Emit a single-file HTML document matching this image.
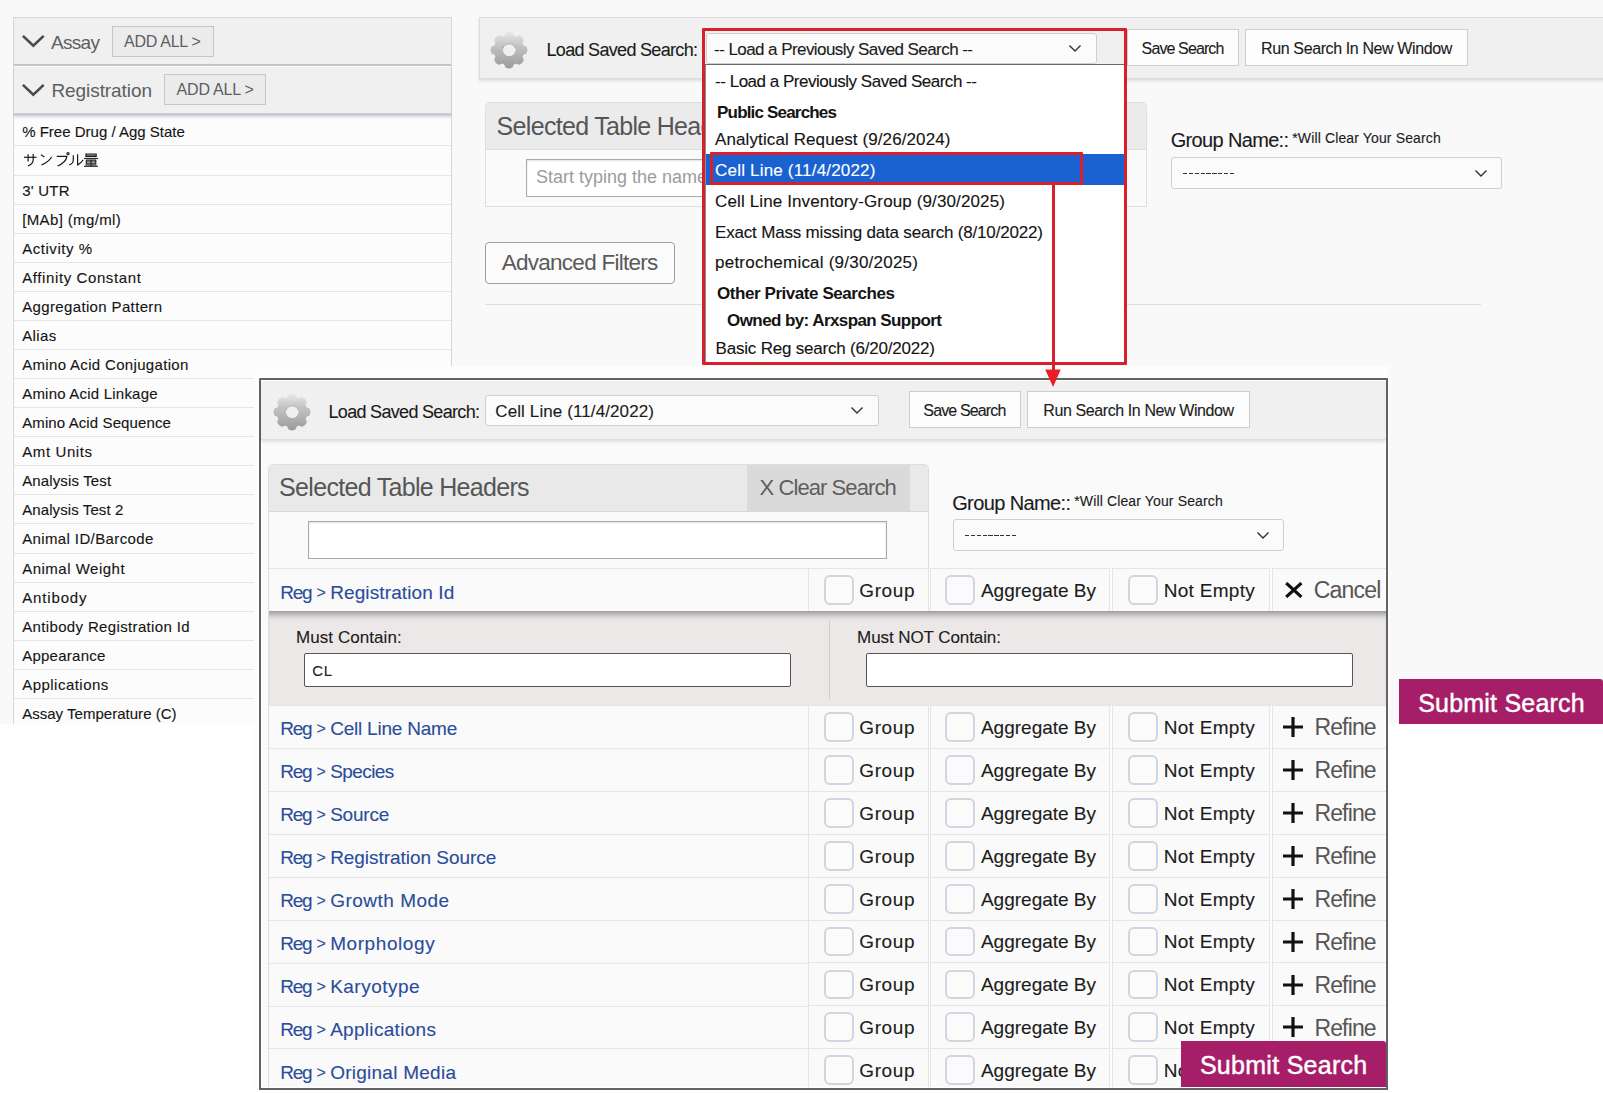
<!DOCTYPE html>
<html lang="en"><head><meta charset="utf-8"><title>Load Saved Search</title><style>html,body{margin:0;padding:0;background:#fff}body{width:1603px;height:1093px;position:relative;overflow:hidden;font-family:"Liberation Sans", sans-serif}#root{position:absolute;left:0;top:0;width:1603px;height:1093px;overflow:hidden}#root div,#root svg,#root span{position:absolute;display:block}#root span{white-space:nowrap;line-height:1;font-kerning:normal}</style></head><body><div id="root"><div class="p1" style="left:0px;top:0px;width:1603px;height:724px;background:#f9f9f9"></div>
<div style="left:13px;top:17px;width:439px;height:707px;background:#fcfcfc;border-left:1px solid #d8d8de;border-right:1px solid #d4d4dc;box-sizing:border-box"></div>
<div style="left:14px;top:145px;width:437px;height:1px;background:#e6e6e6"></div>
<span style="left:22.18px;top:124.00px;font-size:15px;color:#151515;letter-spacing:0.003px;-webkit-text-stroke:0.12px #151515;">% Free Drug / Agg State</span>
<div style="left:14px;top:175px;width:437px;height:1px;background:#e6e6e6"></div>
<svg style="left:18px;top:148px;width:82px;height:22px" viewBox="0 0 82 22"><g fill="none" stroke="#1a1a1a" stroke-width="1.2" stroke-linecap="butt"><path d="M5.9 9.3 H18.5"/><path d="M10.1 6.2 V13.5"/><path d="M15.2 5.9 V11.5 Q15.2 16 10 18"/><path d="M23 6.7 L26.4 9"/><path d="M23.6 16.9 Q30 14.5 33.7 9"/><path d="M38.8 8.4 H48.9 Q48 14.5 39.5 18"/><path d="M55.3 7.3 V12 Q55.3 15.5 51.2 17"/><path d="M59.6 6.2 V16.9 Q63 15.5 65.2 11.8"/><circle cx="50" cy="5.6" r="1.1"/></g><g fill="none" stroke="#1a1a1a" stroke-width="1.05"><path d="M67.9 5.9 H78.2 V8.4 H67.9Z"/><path d="M67.9 7.15 H78.2"/><path d="M66 10.4 H80"/><path d="M68.3 12.1 H77.8 V15.7 H68.3Z"/><path d="M68.3 13.9 H77.8"/><path d="M73.05 12.1 V18.2"/><path d="M66 18.3 H80"/><path d="M67.5 17 H78.5"/></g></svg>
<div style="left:14px;top:204px;width:437px;height:1px;background:#e6e6e6"></div>
<span style="left:22.18px;top:182.90px;font-size:15px;color:#151515;letter-spacing:0.239px;-webkit-text-stroke:0.12px #151515;">3' UTR</span>
<div style="left:14px;top:233px;width:437px;height:1px;background:#e6e6e6"></div>
<span style="left:22.18px;top:211.90px;font-size:15px;color:#151515;letter-spacing:0.373px;-webkit-text-stroke:0.12px #151515;">[MAb] (mg/ml)</span>
<div style="left:14px;top:262px;width:437px;height:1px;background:#e6e6e6"></div>
<span style="left:22.18px;top:240.90px;font-size:15px;color:#151515;letter-spacing:0.543px;-webkit-text-stroke:0.12px #151515;">Activity %</span>
<div style="left:14px;top:291px;width:437px;height:1px;background:#e6e6e6"></div>
<span style="left:22.18px;top:269.90px;font-size:15px;color:#151515;letter-spacing:0.606px;-webkit-text-stroke:0.12px #151515;">Affinity Constant</span>
<div style="left:14px;top:320px;width:437px;height:1px;background:#e6e6e6"></div>
<span style="left:22.18px;top:298.80px;font-size:15px;color:#151515;letter-spacing:0.359px;-webkit-text-stroke:0.12px #151515;">Aggregation Pattern</span>
<div style="left:14px;top:349px;width:437px;height:1px;background:#e6e6e6"></div>
<span style="left:22.18px;top:327.70px;font-size:15px;color:#151515;letter-spacing:0.409px;-webkit-text-stroke:0.12px #151515;">Alias</span>
<div style="left:14px;top:378px;width:437px;height:1px;background:#e6e6e6"></div>
<span style="left:22.18px;top:356.70px;font-size:15px;color:#151515;letter-spacing:0.328px;-webkit-text-stroke:0.12px #151515;">Amino Acid Conjugation</span>
<div style="left:14px;top:407px;width:437px;height:1px;background:#e6e6e6"></div>
<span style="left:22.18px;top:385.70px;font-size:15px;color:#151515;letter-spacing:0.215px;-webkit-text-stroke:0.12px #151515;">Amino Acid Linkage</span>
<div style="left:14px;top:436px;width:437px;height:1px;background:#e6e6e6"></div>
<span style="left:22.18px;top:414.90px;font-size:15px;color:#151515;letter-spacing:0.105px;-webkit-text-stroke:0.12px #151515;">Amino Acid Sequence</span>
<div style="left:14px;top:465px;width:437px;height:1px;background:#e6e6e6"></div>
<span style="left:22.18px;top:443.90px;font-size:15px;color:#151515;letter-spacing:0.611px;-webkit-text-stroke:0.12px #151515;">Amt Units</span>
<div style="left:14px;top:494px;width:437px;height:1px;background:#e6e6e6"></div>
<span style="left:22.18px;top:472.90px;font-size:15px;color:#151515;letter-spacing:0.136px;-webkit-text-stroke:0.12px #151515;">Analysis Test</span>
<div style="left:14px;top:523px;width:437px;height:1px;background:#e6e6e6"></div>
<span style="left:22.18px;top:501.90px;font-size:15px;color:#151515;letter-spacing:0.098px;-webkit-text-stroke:0.12px #151515;">Analysis Test 2</span>
<div style="left:14px;top:553px;width:437px;height:1px;background:#e6e6e6"></div>
<span style="left:22.18px;top:530.90px;font-size:15px;color:#151515;letter-spacing:0.380px;-webkit-text-stroke:0.12px #151515;">Animal ID/Barcode</span>
<div style="left:14px;top:582px;width:437px;height:1px;background:#e6e6e6"></div>
<span style="left:22.18px;top:560.90px;font-size:15px;color:#151515;letter-spacing:0.497px;-webkit-text-stroke:0.12px #151515;">Animal Weight</span>
<div style="left:14px;top:611px;width:437px;height:1px;background:#e6e6e6"></div>
<span style="left:22.18px;top:589.90px;font-size:15px;color:#151515;letter-spacing:0.861px;-webkit-text-stroke:0.12px #151515;">Antibody</span>
<div style="left:14px;top:640px;width:437px;height:1px;background:#e6e6e6"></div>
<span style="left:22.18px;top:618.90px;font-size:15px;color:#151515;letter-spacing:0.354px;-webkit-text-stroke:0.12px #151515;">Antibody Registration Id</span>
<div style="left:14px;top:669px;width:437px;height:1px;background:#e6e6e6"></div>
<span style="left:22.18px;top:647.90px;font-size:15px;color:#151515;letter-spacing:0.249px;-webkit-text-stroke:0.12px #151515;">Appearance</span>
<div style="left:14px;top:698px;width:437px;height:1px;background:#e6e6e6"></div>
<span style="left:22.18px;top:676.90px;font-size:15px;color:#151515;letter-spacing:0.478px;-webkit-text-stroke:0.12px #151515;">Applications</span>
<span style="left:22.18px;top:705.90px;font-size:15px;color:#151515;letter-spacing:0.022px;-webkit-text-stroke:0.12px #151515;">Assay Temperature (C)</span>
<div style="left:13px;top:17px;width:439px;height:49px;background:#f0f0f0;border:1px solid #d6d6dc;border-bottom:2px solid #c4c4cc;box-sizing:border-box"></div>
<div style="left:13px;top:66px;width:439px;height:48px;background:#f0f0f0;border:1px solid #d0d0d8;border-top:1px solid #fcfcfc;border-bottom:1px solid #cfcfd8;box-sizing:border-box"></div>
<div style="left:13px;top:114px;width:439px;height:5px;background:linear-gradient(#bdbdd0,rgba(208,208,224,.65) 45%,rgba(252,252,252,0))"></div>
<svg style="left:20px;top:33.3px;width:26.6px;height:16.6px" viewBox="0 0 26.6 16.6"><path d="M2.91 2.91 L13.3 12.78 L23.69 2.91" fill="none" stroke="#4a4a4a" stroke-width="2.6" stroke-linecap="butt" stroke-linejoin="miter"/></svg>
<svg style="left:20px;top:81.5px;width:26.6px;height:16.6px" viewBox="0 0 26.6 16.6"><path d="M2.91 2.91 L13.3 12.78 L23.69 2.91" fill="none" stroke="#4a4a4a" stroke-width="2.6" stroke-linecap="butt" stroke-linejoin="miter"/></svg>
<span style="left:50.95px;top:32.75px;font-size:19px;color:#5e5e5e;letter-spacing:-0.665px;">Assay</span>
<span style="left:51.45px;top:81.00px;font-size:19px;color:#5e5e5e;letter-spacing:-0.073px;">Registration</span>
<div style="left:112px;top:26px;width:102px;height:31px;background:#ebebeb;border:1px solid #c6c6c6;box-sizing:border-box"></div>
<div style="left:164px;top:74px;width:102px;height:31px;background:#ebebeb;border:1px solid #c6c6c6;box-sizing:border-box"></div>
<span style="left:124.12px;top:33.50px;font-size:16px;color:#5e5e5e;letter-spacing:-0.282px;">ADD ALL &gt;</span>
<span style="left:176.62px;top:81.70px;font-size:16px;color:#5e5e5e;letter-spacing:-0.219px;">ADD ALL &gt;</span>
<div style="left:479px;top:17px;width:1130px;height:62px;background:#f0f0f0;border:1px solid #dcdcdc;box-sizing:border-box;box-shadow:0 2px 3px rgba(0,0,0,.12)"></div>
<svg style="left:490.4px;top:30.8px;width:38px;height:38px" viewBox="0 0 38 38"><defs><linearGradient id="g1" x1="0" y1="0" x2="0" y2="1"><stop offset="0" stop-color="#e9e9e9"/><stop offset="0.4" stop-color="#c2c2c2"/><stop offset="1" stop-color="#9a9a9a"/></linearGradient></defs><path d="M19.00 0.55 L19.72 0.62 L20.43 0.82 L21.11 1.13 L21.81 1.27 L22.50 1.39 L22.93 2.63 L23.35 3.58 L23.78 4.30 L24.23 4.82 L24.74 5.14 L25.33 5.27 L26.02 5.23 L26.83 5.02 L27.80 4.64 L28.97 4.08 L29.55 4.48 L30.14 4.87 L30.84 5.13 L31.49 5.49 L32.05 5.95 L32.51 6.51 L32.87 7.16 L33.13 7.86 L33.52 8.45 L33.92 9.03 L33.36 10.20 L32.98 11.17 L32.77 11.98 L32.73 12.67 L32.86 13.26 L33.18 13.77 L33.70 14.22 L34.42 14.65 L35.37 15.07 L36.61 15.50 L36.73 16.19 L36.87 16.89 L37.18 17.57 L37.38 18.28 L37.45 19.00 L37.38 19.72 L37.18 20.43 L36.87 21.11 L36.73 21.81 L36.61 22.50 L35.37 22.93 L34.42 23.35 L33.70 23.78 L33.18 24.23 L32.86 24.74 L32.73 25.33 L32.77 26.02 L32.98 26.83 L33.36 27.80 L33.92 28.97 L33.52 29.55 L33.13 30.14 L32.87 30.84 L32.51 31.49 L32.05 32.05 L31.49 32.51 L30.84 32.87 L30.14 33.13 L29.55 33.52 L28.97 33.92 L27.80 33.36 L26.83 32.98 L26.02 32.77 L25.33 32.73 L24.74 32.86 L24.23 33.18 L23.78 33.70 L23.35 34.42 L22.93 35.37 L22.50 36.61 L21.81 36.73 L21.11 36.87 L20.43 37.18 L19.72 37.38 L19.00 37.45 L18.28 37.38 L17.57 37.18 L16.89 36.87 L16.19 36.73 L15.50 36.61 L15.07 35.37 L14.65 34.42 L14.22 33.70 L13.77 33.18 L13.26 32.86 L12.67 32.73 L11.98 32.77 L11.17 32.98 L10.20 33.36 L9.03 33.92 L8.45 33.52 L7.86 33.13 L7.16 32.87 L6.51 32.51 L5.95 32.05 L5.49 31.49 L5.13 30.84 L4.87 30.14 L4.48 29.55 L4.08 28.97 L4.64 27.80 L5.02 26.83 L5.23 26.02 L5.27 25.33 L5.14 24.74 L4.82 24.23 L4.30 23.78 L3.58 23.35 L2.63 22.93 L1.39 22.50 L1.27 21.81 L1.13 21.11 L0.82 20.43 L0.62 19.72 L0.55 19.00 L0.62 18.28 L0.82 17.57 L1.13 16.89 L1.27 16.19 L1.39 15.50 L2.63 15.07 L3.58 14.65 L4.30 14.22 L4.82 13.77 L5.14 13.26 L5.27 12.67 L5.23 11.98 L5.02 11.17 L4.64 10.20 L4.08 9.03 L4.48 8.45 L4.87 7.86 L5.13 7.16 L5.49 6.51 L5.95 5.95 L6.51 5.49 L7.16 5.13 L7.86 4.87 L8.45 4.48 L9.03 4.08 L10.20 4.64 L11.17 5.02 L11.98 5.23 L12.67 5.27 L13.26 5.14 L13.77 4.82 L14.22 4.30 L14.65 3.58 L15.07 2.63 L15.50 1.39 L16.19 1.27 L16.89 1.13 L17.57 0.82 L18.28 0.62Z M25.6 18.6 A6.4 6.4 0 1 0 12.8 18.6 A6.4 6.4 0 1 0 25.6 18.6Z" fill="url(#g1)" fill-rule="evenodd"/><path d="M13.1 17.3 A6.4 6.4 0 0 1 25.3 17.3" fill="none" stroke="#8e8e8e" stroke-width="0.9" opacity="0.8"/></svg>
<span style="left:546.51px;top:41.25px;font-size:18px;color:#1c1c1c;letter-spacing:-0.685px;-webkit-text-stroke:0.12px #1c1c1c;">Load Saved Search:</span>
<div style="left:706px;top:33px;width:391px;height:31px;background:#fbfbfb;border:1px solid #cfcfcf;border-radius:3px;box-sizing:border-box"></div>
<span style="left:714.07px;top:41.00px;font-size:17px;color:#1c1c1c;letter-spacing:-0.568px;-webkit-text-stroke:0.12px #1c1c1c;">-- Load a Previously Saved Search --</span>
<svg style="left:1066.75px;top:43px;width:16px;height:11px" viewBox="0 0 16 11"><path d="M2.49 2.49 L8 8.02 L13.51 2.49" fill="none" stroke="#333" stroke-width="1.4" stroke-linecap="butt" stroke-linejoin="miter"/></svg>
<div style="left:1127px;top:29px;width:112px;height:37px;background:#fdfdfd;border:1px solid #cdcdcd;box-sizing:border-box"></div>
<span style="left:1141.62px;top:40.50px;font-size:16px;color:#1c1c1c;letter-spacing:-0.885px;-webkit-text-stroke:0.12px #1c1c1c;">Save Search</span>
<div style="left:1245px;top:29px;width:223px;height:37px;background:#fdfdfd;border:1px solid #cdcdcd;box-sizing:border-box"></div>
<span style="left:1261.12px;top:40.50px;font-size:16px;color:#1c1c1c;letter-spacing:-0.388px;-webkit-text-stroke:0.12px #1c1c1c;">Run Search In New Window</span>
<div style="left:485px;top:102px;width:662px;height:105px;background:#fafafa;border:1px solid #dedede;border-radius:5px 5px 0 0;box-sizing:border-box"></div>
<div style="left:486px;top:103px;width:660px;height:47px;background:#ebebeb;border-radius:4px 4px 0 0;border-bottom:1px solid #dcdcdc;box-sizing:border-box"></div>
<span style="left:496.62px;top:113.50px;font-size:25px;color:#565656;letter-spacing:-0.690px;">Selected Table Headers</span>
<div style="left:526px;top:159px;width:580px;height:38px;background:#fff;border:1px solid #a9a9a9;box-sizing:border-box;box-shadow:inset 0 1px 2px rgba(0,0,0,.13)"></div>
<span style="left:536.00px;top:167.80px;font-size:18px;color:#9c9c9c;">Start typing the name of a field</span>
<span style="left:1170.65px;top:130.00px;font-size:20px;color:#1c1c1c;letter-spacing:-0.651px;-webkit-text-stroke:0.12px #1c1c1c;">Group Name::</span>
<span style="left:1292.23px;top:131.30px;font-size:14px;color:#1c1c1c;letter-spacing:0.137px;-webkit-text-stroke:0.12px #1c1c1c;">*Will Clear Your Search</span>
<div style="left:1171px;top:157px;width:331px;height:31.5px;background:#fbfbfb;border:1px solid #cfcfcf;border-radius:3px;box-sizing:border-box"></div>
<div style="left:1183px;top:172.5px;width:51px;height:1.3px;background:repeating-linear-gradient(90deg,#333 0,#333 4.3px,transparent 4.3px,transparent 5.85px)"></div>
<svg style="left:1473px;top:167.7px;width:16px;height:11px" viewBox="0 0 16 11"><path d="M2.49 2.49 L8 8.02 L13.51 2.49" fill="none" stroke="#333" stroke-width="1.4" stroke-linecap="butt" stroke-linejoin="miter"/></svg>
<div style="left:485px;top:242px;width:190px;height:42px;background:#fbfbfb;border:1px solid #9f9f9f;border-radius:4px;box-sizing:border-box"></div>
<span style="left:501.76px;top:252.25px;font-size:22.5px;color:#5a5a5a;letter-spacing:-0.740px;">Advanced Filters</span>
<div style="left:485px;top:304px;width:996px;height:1px;background:#dedede"></div>
<div style="left:705px;top:64px;width:419.5px;height:298px;background:#fff;border-top:1px solid #6b6b6b;border-left:1px solid #8a8a8a;box-sizing:border-box"></div>
<div style="left:706px;top:154px;width:419px;height:31px;background:#1a62d2"></div>
<span style="left:715.07px;top:73.00px;font-size:17px;color:#141414;letter-spacing:-0.482px;-webkit-text-stroke:0.12px #141414;">-- Load a Previously Saved Search --</span>
<span style="left:717.07px;top:103.50px;font-size:17px;color:#141414;font-weight:700;letter-spacing:-0.820px;">Public Searches</span>
<span style="left:715.07px;top:130.50px;font-size:17px;color:#141414;letter-spacing:0.100px;-webkit-text-stroke:0.12px #141414;">Analytical Request (9/26/2024)</span>
<span style="left:715.07px;top:161.75px;font-size:17px;color:#fff;letter-spacing:0.190px;-webkit-text-stroke:0.12px #fff;">Cell Line (11/4/2022)</span>
<span style="left:715.07px;top:193.00px;font-size:17px;color:#141414;letter-spacing:0.124px;-webkit-text-stroke:0.12px #141414;">Cell Line Inventory-Group (9/30/2025)</span>
<span style="left:715.07px;top:223.50px;font-size:17px;color:#141414;letter-spacing:-0.185px;-webkit-text-stroke:0.12px #141414;">Exact Mass missing data search (8/10/2022)</span>
<span style="left:715.07px;top:254.30px;font-size:17px;color:#141414;letter-spacing:0.223px;-webkit-text-stroke:0.12px #141414;">petrochemical (9/30/2025)</span>
<span style="left:717.07px;top:285.25px;font-size:17px;color:#141414;font-weight:700;letter-spacing:-0.440px;">Other Private Searches</span>
<span style="left:727.07px;top:312.00px;font-size:17px;color:#141414;font-weight:700;letter-spacing:-0.584px;">Owned by: Arxspan Support</span>
<span style="left:715.57px;top:339.50px;font-size:17px;color:#141414;letter-spacing:-0.205px;-webkit-text-stroke:0.12px #141414;">Basic Reg search (6/20/2022)</span>
<div style="left:1399px;top:679px;width:204px;height:45px;background:#a61e68;border-radius:0 3px 0 0"></div>
<span style="left:1418.22px;top:690.90px;font-size:25px;color:#fff;letter-spacing:0.207px;-webkit-text-stroke:0.45px #fff;">Submit Search</span>
<div style="left:254px;top:366px;width:1134px;height:727px;background:#fdfdfd"></div>
<div style="left:259px;top:378px;width:1129px;height:712px;background:#fafafa;border:2px solid #626262;box-sizing:border-box;border-radius:1px;box-shadow:inset 0 0 0 1px rgba(255,255,255,.85),0 0 0 1px #fff"></div>
<div style="left:261px;top:381px;width:1125px;height:59px;background:#f0f0f0;border-bottom:1px solid #dedede;box-sizing:border-box;box-shadow:0 2px 3px rgba(0,0,0,.10)"></div>
<svg style="left:272.6px;top:393px;width:38px;height:38px" viewBox="0 0 38 38"><defs><linearGradient id="g2" x1="0" y1="0" x2="0" y2="1"><stop offset="0" stop-color="#e9e9e9"/><stop offset="0.4" stop-color="#c2c2c2"/><stop offset="1" stop-color="#9a9a9a"/></linearGradient></defs><path d="M19.00 0.55 L19.72 0.62 L20.43 0.82 L21.11 1.13 L21.81 1.27 L22.50 1.39 L22.93 2.63 L23.35 3.58 L23.78 4.30 L24.23 4.82 L24.74 5.14 L25.33 5.27 L26.02 5.23 L26.83 5.02 L27.80 4.64 L28.97 4.08 L29.55 4.48 L30.14 4.87 L30.84 5.13 L31.49 5.49 L32.05 5.95 L32.51 6.51 L32.87 7.16 L33.13 7.86 L33.52 8.45 L33.92 9.03 L33.36 10.20 L32.98 11.17 L32.77 11.98 L32.73 12.67 L32.86 13.26 L33.18 13.77 L33.70 14.22 L34.42 14.65 L35.37 15.07 L36.61 15.50 L36.73 16.19 L36.87 16.89 L37.18 17.57 L37.38 18.28 L37.45 19.00 L37.38 19.72 L37.18 20.43 L36.87 21.11 L36.73 21.81 L36.61 22.50 L35.37 22.93 L34.42 23.35 L33.70 23.78 L33.18 24.23 L32.86 24.74 L32.73 25.33 L32.77 26.02 L32.98 26.83 L33.36 27.80 L33.92 28.97 L33.52 29.55 L33.13 30.14 L32.87 30.84 L32.51 31.49 L32.05 32.05 L31.49 32.51 L30.84 32.87 L30.14 33.13 L29.55 33.52 L28.97 33.92 L27.80 33.36 L26.83 32.98 L26.02 32.77 L25.33 32.73 L24.74 32.86 L24.23 33.18 L23.78 33.70 L23.35 34.42 L22.93 35.37 L22.50 36.61 L21.81 36.73 L21.11 36.87 L20.43 37.18 L19.72 37.38 L19.00 37.45 L18.28 37.38 L17.57 37.18 L16.89 36.87 L16.19 36.73 L15.50 36.61 L15.07 35.37 L14.65 34.42 L14.22 33.70 L13.77 33.18 L13.26 32.86 L12.67 32.73 L11.98 32.77 L11.17 32.98 L10.20 33.36 L9.03 33.92 L8.45 33.52 L7.86 33.13 L7.16 32.87 L6.51 32.51 L5.95 32.05 L5.49 31.49 L5.13 30.84 L4.87 30.14 L4.48 29.55 L4.08 28.97 L4.64 27.80 L5.02 26.83 L5.23 26.02 L5.27 25.33 L5.14 24.74 L4.82 24.23 L4.30 23.78 L3.58 23.35 L2.63 22.93 L1.39 22.50 L1.27 21.81 L1.13 21.11 L0.82 20.43 L0.62 19.72 L0.55 19.00 L0.62 18.28 L0.82 17.57 L1.13 16.89 L1.27 16.19 L1.39 15.50 L2.63 15.07 L3.58 14.65 L4.30 14.22 L4.82 13.77 L5.14 13.26 L5.27 12.67 L5.23 11.98 L5.02 11.17 L4.64 10.20 L4.08 9.03 L4.48 8.45 L4.87 7.86 L5.13 7.16 L5.49 6.51 L5.95 5.95 L6.51 5.49 L7.16 5.13 L7.86 4.87 L8.45 4.48 L9.03 4.08 L10.20 4.64 L11.17 5.02 L11.98 5.23 L12.67 5.27 L13.26 5.14 L13.77 4.82 L14.22 4.30 L14.65 3.58 L15.07 2.63 L15.50 1.39 L16.19 1.27 L16.89 1.13 L17.57 0.82 L18.28 0.62Z M25.6 18.6 A6.4 6.4 0 1 0 12.8 18.6 A6.4 6.4 0 1 0 25.6 18.6Z" fill="url(#g2)" fill-rule="evenodd"/><path d="M13.1 17.3 A6.4 6.4 0 0 1 25.3 17.3" fill="none" stroke="#8e8e8e" stroke-width="0.9" opacity="0.8"/></svg>
<span style="left:328.51px;top:403.00px;font-size:18px;color:#1c1c1c;letter-spacing:-0.685px;-webkit-text-stroke:0.12px #1c1c1c;">Load Saved Search:</span>
<div style="left:485px;top:395px;width:394px;height:31px;background:#fbfbfb;border:1px solid #cfcfcf;border-radius:3px;box-sizing:border-box"></div>
<span style="left:495.31px;top:403.25px;font-size:17px;color:#1c1c1c;letter-spacing:0.103px;-webkit-text-stroke:0.12px #1c1c1c;">Cell Line (11/4/2022)</span>
<svg style="left:848.75px;top:405.25px;width:16px;height:11px" viewBox="0 0 16 11"><path d="M2.49 2.49 L8 8.02 L13.51 2.49" fill="none" stroke="#333" stroke-width="1.4" stroke-linecap="butt" stroke-linejoin="miter"/></svg>
<div style="left:909px;top:391px;width:112px;height:37px;background:#fdfdfd;border:1px solid #cdcdcd;box-sizing:border-box"></div>
<span style="left:923.37px;top:403.25px;font-size:16px;color:#1c1c1c;letter-spacing:-0.860px;-webkit-text-stroke:0.12px #1c1c1c;">Save Search</span>
<div style="left:1027px;top:391px;width:223px;height:37px;background:#fdfdfd;border:1px solid #cdcdcd;box-sizing:border-box"></div>
<span style="left:1043.37px;top:403.25px;font-size:16px;color:#1c1c1c;letter-spacing:-0.406px;-webkit-text-stroke:0.12px #1c1c1c;">Run Search In New Window</span>
<div style="left:267.5px;top:464px;width:661.5px;height:624px;background:#fafafa;border:1px solid #dedede;border-bottom:0;border-radius:5px 5px 0 0;box-sizing:border-box"></div>
<div style="left:268.5px;top:465px;width:659.5px;height:47px;background:#e9e9e9;border-radius:4px 4px 0 0;border-bottom:1px solid #d8d8d8;box-sizing:border-box"></div>
<span style="left:279.12px;top:475.25px;font-size:25px;color:#565656;letter-spacing:-0.690px;">Selected Table Headers</span>
<div style="left:747px;top:465px;width:163px;height:46px;background:#dadada"></div>
<span style="left:759.54px;top:476.50px;font-size:22px;color:#5e5e5e;letter-spacing:-0.924px;">X Clear Search</span>
<div style="left:308px;top:521px;width:579px;height:37.5px;background:#fff;border:1px solid #a9a9a9;box-sizing:border-box;box-shadow:inset 0 1px 2px rgba(0,0,0,.13)"></div>
<span style="left:952.15px;top:493.00px;font-size:20px;color:#1c1c1c;letter-spacing:-0.605px;-webkit-text-stroke:0.12px #1c1c1c;">Group Name::</span>
<span style="left:1074.23px;top:493.50px;font-size:14px;color:#1c1c1c;letter-spacing:0.137px;-webkit-text-stroke:0.12px #1c1c1c;">*Will Clear Your Search</span>
<div style="left:953px;top:519px;width:331px;height:31.5px;background:#fbfbfb;border:1px solid #cfcfcf;border-radius:3px;box-sizing:border-box"></div>
<div style="left:964.5px;top:534.5px;width:51px;height:1.3px;background:repeating-linear-gradient(90deg,#333 0,#333 4.3px,transparent 4.3px,transparent 5.85px)"></div>
<svg style="left:1255.3px;top:529.6px;width:16px;height:11px" viewBox="0 0 16 11"><path d="M2.49 2.49 L8 8.02 L13.51 2.49" fill="none" stroke="#333" stroke-width="1.4" stroke-linecap="butt" stroke-linejoin="miter"/></svg>
<div style="left:268.5px;top:568px;width:540px;height:1px;background:#e5e5e5"></div>
<div style="left:808.5px;top:568px;width:120px;height:1px;background:#e5e5e5"></div>
<div style="left:930px;top:568px;width:180px;height:1px;background:#e5e5e5"></div>
<div style="left:1112px;top:568px;width:158px;height:1px;background:#e5e5e5"></div>
<div style="left:1272px;top:568px;width:114px;height:1px;background:#e5e5e5"></div>
<div style="left:808px;top:568.5px;width:1px;height:43px;background:#e5e5e5"></div>
<div style="left:928px;top:568.5px;width:1px;height:43px;background:#e5e5e5"></div>
<div style="left:930px;top:568.5px;width:1px;height:43px;background:#e5e5e5"></div>
<div style="left:1109px;top:568.5px;width:1px;height:43px;background:#e5e5e5"></div>
<div style="left:1112px;top:568.5px;width:1px;height:43px;background:#e5e5e5"></div>
<div style="left:1269px;top:568.5px;width:1px;height:43px;background:#e5e5e5"></div>
<div style="left:1272px;top:568.5px;width:1px;height:43px;background:#e5e5e5"></div>
<div style="left:1110.5px;top:567.5px;width:1.5px;height:44px;background:#fdfdfd"></div>
<div style="left:1270.5px;top:567.5px;width:1.5px;height:44px;background:#fdfdfd"></div>
<span style="left:280.15px;top:582.70px;font-size:19px;color:#2b4c9b;letter-spacing:-1.185px;-webkit-text-stroke:0.12px #2b4c9b;">Reg</span>
<span style="left:317.40px;top:584.70px;font-size:16px;color:#2b4c9b;-webkit-text-stroke:0.12px #2b4c9b;margin-left:-0.8px;">&gt;</span>
<span style="left:330.15px;top:582.70px;font-size:19px;color:#2b4c9b;letter-spacing:0.116px;-webkit-text-stroke:0.12px #2b4c9b;">Registration Id</span>
<div style="left:824.25px;top:575.25px;width:29.5px;height:29.5px;background:#fbfbfb;border:2px solid #cfd6df;border-radius:6px;box-sizing:border-box"></div>
<div style="left:945px;top:575.25px;width:29.5px;height:29.5px;background:#fbfbfb;border:2px solid #cfd6df;border-radius:6px;box-sizing:border-box"></div>
<div style="left:1128.25px;top:575.25px;width:29.5px;height:29.5px;background:#fbfbfb;border:2px solid #cfd6df;border-radius:6px;box-sizing:border-box"></div>
<span style="left:859.36px;top:581.25px;font-size:19px;color:#1c1c1c;letter-spacing:0.569px;-webkit-text-stroke:0.12px #1c1c1c;">Group</span>
<span style="left:980.96px;top:581.25px;font-size:19px;color:#1c1c1c;letter-spacing:-0.005px;-webkit-text-stroke:0.12px #1c1c1c;">Aggregate By</span>
<span style="left:1163.65px;top:581.25px;font-size:19px;color:#1c1c1c;letter-spacing:0.298px;-webkit-text-stroke:0.12px #1c1c1c;">Not Empty</span>
<svg style="left:1285px;top:582px;width:18px;height:16px" viewBox="0 0 18 16"><path d="M1.2 1 L16.4 15 M16.4 1 L1.2 15" stroke="#111" stroke-width="3.1" fill="none"/></svg>
<span style="left:1313.73px;top:579.30px;font-size:23px;color:#565656;letter-spacing:-0.776px;">Cancel</span>
<div style="left:268.5px;top:611px;width:1117.5px;height:94.5px;background:#ebe8e7;box-shadow:inset 0 9px 7px -6px rgba(0,0,0,.40)"></div>
<div style="left:828.5px;top:621px;width:1px;height:79px;background:#cfcccb"></div>
<span style="left:296.06px;top:629.00px;font-size:17px;color:#1c1c1c;letter-spacing:0.057px;-webkit-text-stroke:0.12px #1c1c1c;">Must Contain:</span>
<span style="left:857.07px;top:629.00px;font-size:17px;color:#1c1c1c;letter-spacing:-0.082px;-webkit-text-stroke:0.12px #1c1c1c;">Must NOT Contain:</span>
<div style="left:304px;top:653px;width:487px;height:34px;background:#fff;border:1px solid #555;border-radius:2px;box-sizing:border-box"></div>
<div style="left:866px;top:653px;width:487px;height:34px;background:#fff;border:1px solid #555;border-radius:2px;box-sizing:border-box"></div>
<span style="left:312.18px;top:663.00px;font-size:15px;color:#1c1c1c;letter-spacing:0.712px;-webkit-text-stroke:0.12px #1c1c1c;">CL</span>
<div style="left:268.5px;top:705px;width:540px;height:1px;background:#e5e5e5"></div>
<div style="left:808.5px;top:705px;width:120px;height:1px;background:#e5e5e5"></div>
<div style="left:930px;top:705px;width:180px;height:1px;background:#e5e5e5"></div>
<div style="left:1112px;top:705px;width:158px;height:1px;background:#e5e5e5"></div>
<div style="left:1272px;top:705px;width:114px;height:1px;background:#e5e5e5"></div>
<div style="left:808px;top:705.5px;width:1px;height:43px;background:#e5e5e5"></div>
<div style="left:928px;top:705.5px;width:1px;height:43px;background:#e5e5e5"></div>
<div style="left:930px;top:705.5px;width:1px;height:43px;background:#e5e5e5"></div>
<div style="left:1109px;top:705.5px;width:1px;height:43px;background:#e5e5e5"></div>
<div style="left:1112px;top:705.5px;width:1px;height:43px;background:#e5e5e5"></div>
<div style="left:1269px;top:705.5px;width:1px;height:43px;background:#e5e5e5"></div>
<div style="left:1272px;top:705.5px;width:1px;height:43px;background:#e5e5e5"></div>
<div style="left:1110.5px;top:704.5px;width:1.5px;height:44px;background:#fdfdfd"></div>
<div style="left:1270.5px;top:704.5px;width:1.5px;height:44px;background:#fdfdfd"></div>
<span style="left:280.15px;top:719.00px;font-size:19px;color:#2b4c9b;letter-spacing:-1.185px;-webkit-text-stroke:0.12px #2b4c9b;">Reg</span>
<span style="left:317.40px;top:721.00px;font-size:16px;color:#2b4c9b;-webkit-text-stroke:0.12px #2b4c9b;margin-left:-0.8px;">&gt;</span>
<span style="left:330.15px;top:719.00px;font-size:19px;color:#2b4c9b;letter-spacing:-0.213px;-webkit-text-stroke:0.12px #2b4c9b;">Cell Line Name</span>
<div style="left:824.25px;top:712.25px;width:29.5px;height:29.5px;background:#fbfbfb;border:2px solid #cfd6df;border-radius:6px;box-sizing:border-box"></div>
<div style="left:945px;top:712.25px;width:29.5px;height:29.5px;background:#fbfbfb;border:2px solid #cfd6df;border-radius:6px;box-sizing:border-box"></div>
<div style="left:1128.25px;top:712.25px;width:29.5px;height:29.5px;background:#fbfbfb;border:2px solid #cfd6df;border-radius:6px;box-sizing:border-box"></div>
<span style="left:859.36px;top:717.60px;font-size:19px;color:#1c1c1c;letter-spacing:0.569px;-webkit-text-stroke:0.12px #1c1c1c;">Group</span>
<span style="left:980.96px;top:717.60px;font-size:19px;color:#1c1c1c;letter-spacing:-0.005px;-webkit-text-stroke:0.12px #1c1c1c;">Aggregate By</span>
<span style="left:1163.65px;top:717.60px;font-size:19px;color:#1c1c1c;letter-spacing:0.298px;-webkit-text-stroke:0.12px #1c1c1c;">Not Empty</span>
<svg style="left:1283.2px;top:717.1px;width:20px;height:20px" viewBox="0 0 20 20"><path d="M10 0V20M0 10H20" stroke="#111" stroke-width="3.2" fill="none"/></svg>
<span style="left:1314.43px;top:716.30px;font-size:23px;color:#565656;letter-spacing:-0.851px;">Refine</span>
<div style="left:268.5px;top:748px;width:540px;height:1px;background:#e5e5e5"></div>
<div style="left:808.5px;top:748px;width:120px;height:1px;background:#e5e5e5"></div>
<div style="left:930px;top:748px;width:180px;height:1px;background:#e5e5e5"></div>
<div style="left:1112px;top:748px;width:158px;height:1px;background:#e5e5e5"></div>
<div style="left:1272px;top:748px;width:114px;height:1px;background:#e5e5e5"></div>
<div style="left:808px;top:748.5px;width:1px;height:43px;background:#e5e5e5"></div>
<div style="left:928px;top:748.5px;width:1px;height:43px;background:#e5e5e5"></div>
<div style="left:930px;top:748.5px;width:1px;height:43px;background:#e5e5e5"></div>
<div style="left:1109px;top:748.5px;width:1px;height:43px;background:#e5e5e5"></div>
<div style="left:1112px;top:748.5px;width:1px;height:43px;background:#e5e5e5"></div>
<div style="left:1269px;top:748.5px;width:1px;height:43px;background:#e5e5e5"></div>
<div style="left:1272px;top:748.5px;width:1px;height:43px;background:#e5e5e5"></div>
<div style="left:1110.5px;top:747.5px;width:1.5px;height:44px;background:#fdfdfd"></div>
<div style="left:1270.5px;top:747.5px;width:1.5px;height:44px;background:#fdfdfd"></div>
<span style="left:280.15px;top:762.00px;font-size:19px;color:#2b4c9b;letter-spacing:-1.185px;-webkit-text-stroke:0.12px #2b4c9b;">Reg</span>
<span style="left:317.40px;top:764.00px;font-size:16px;color:#2b4c9b;-webkit-text-stroke:0.12px #2b4c9b;margin-left:-0.8px;">&gt;</span>
<span style="left:330.15px;top:762.00px;font-size:19px;color:#2b4c9b;letter-spacing:-0.578px;-webkit-text-stroke:0.12px #2b4c9b;">Species</span>
<div style="left:824.25px;top:755.25px;width:29.5px;height:29.5px;background:#fbfbfb;border:2px solid #cfd6df;border-radius:6px;box-sizing:border-box"></div>
<div style="left:945px;top:755.25px;width:29.5px;height:29.5px;background:#fbfbfb;border:2px solid #cfd6df;border-radius:6px;box-sizing:border-box"></div>
<div style="left:1128.25px;top:755.25px;width:29.5px;height:29.5px;background:#fbfbfb;border:2px solid #cfd6df;border-radius:6px;box-sizing:border-box"></div>
<span style="left:859.36px;top:760.60px;font-size:19px;color:#1c1c1c;letter-spacing:0.569px;-webkit-text-stroke:0.12px #1c1c1c;">Group</span>
<span style="left:980.96px;top:760.60px;font-size:19px;color:#1c1c1c;letter-spacing:-0.005px;-webkit-text-stroke:0.12px #1c1c1c;">Aggregate By</span>
<span style="left:1163.65px;top:760.60px;font-size:19px;color:#1c1c1c;letter-spacing:0.298px;-webkit-text-stroke:0.12px #1c1c1c;">Not Empty</span>
<svg style="left:1283.2px;top:760.1px;width:20px;height:20px" viewBox="0 0 20 20"><path d="M10 0V20M0 10H20" stroke="#111" stroke-width="3.2" fill="none"/></svg>
<span style="left:1314.43px;top:759.30px;font-size:23px;color:#565656;letter-spacing:-0.851px;">Refine</span>
<div style="left:268.5px;top:791px;width:540px;height:1px;background:#e5e5e5"></div>
<div style="left:808.5px;top:791px;width:120px;height:1px;background:#e5e5e5"></div>
<div style="left:930px;top:791px;width:180px;height:1px;background:#e5e5e5"></div>
<div style="left:1112px;top:791px;width:158px;height:1px;background:#e5e5e5"></div>
<div style="left:1272px;top:791px;width:114px;height:1px;background:#e5e5e5"></div>
<div style="left:808px;top:791.6px;width:1px;height:43px;background:#e5e5e5"></div>
<div style="left:928px;top:791.6px;width:1px;height:43px;background:#e5e5e5"></div>
<div style="left:930px;top:791.6px;width:1px;height:43px;background:#e5e5e5"></div>
<div style="left:1109px;top:791.6px;width:1px;height:43px;background:#e5e5e5"></div>
<div style="left:1112px;top:791.6px;width:1px;height:43px;background:#e5e5e5"></div>
<div style="left:1269px;top:791.6px;width:1px;height:43px;background:#e5e5e5"></div>
<div style="left:1272px;top:791.6px;width:1px;height:43px;background:#e5e5e5"></div>
<div style="left:1110.5px;top:790.6px;width:1.5px;height:44px;background:#fdfdfd"></div>
<div style="left:1270.5px;top:790.6px;width:1.5px;height:44px;background:#fdfdfd"></div>
<span style="left:280.15px;top:805.10px;font-size:19px;color:#2b4c9b;letter-spacing:-1.185px;-webkit-text-stroke:0.12px #2b4c9b;">Reg</span>
<span style="left:317.40px;top:807.10px;font-size:16px;color:#2b4c9b;-webkit-text-stroke:0.12px #2b4c9b;margin-left:-0.8px;">&gt;</span>
<span style="left:330.15px;top:805.10px;font-size:19px;color:#2b4c9b;letter-spacing:-0.213px;-webkit-text-stroke:0.12px #2b4c9b;">Source</span>
<div style="left:824.25px;top:798.35px;width:29.5px;height:29.5px;background:#fbfbfb;border:2px solid #cfd6df;border-radius:6px;box-sizing:border-box"></div>
<div style="left:945px;top:798.35px;width:29.5px;height:29.5px;background:#fbfbfb;border:2px solid #cfd6df;border-radius:6px;box-sizing:border-box"></div>
<div style="left:1128.25px;top:798.35px;width:29.5px;height:29.5px;background:#fbfbfb;border:2px solid #cfd6df;border-radius:6px;box-sizing:border-box"></div>
<span style="left:859.36px;top:803.70px;font-size:19px;color:#1c1c1c;letter-spacing:0.569px;-webkit-text-stroke:0.12px #1c1c1c;">Group</span>
<span style="left:980.96px;top:803.70px;font-size:19px;color:#1c1c1c;letter-spacing:-0.005px;-webkit-text-stroke:0.12px #1c1c1c;">Aggregate By</span>
<span style="left:1163.65px;top:803.70px;font-size:19px;color:#1c1c1c;letter-spacing:0.298px;-webkit-text-stroke:0.12px #1c1c1c;">Not Empty</span>
<svg style="left:1283.2px;top:803.2px;width:20px;height:20px" viewBox="0 0 20 20"><path d="M10 0V20M0 10H20" stroke="#111" stroke-width="3.2" fill="none"/></svg>
<span style="left:1314.43px;top:802.40px;font-size:23px;color:#565656;letter-spacing:-0.851px;">Refine</span>
<div style="left:268.5px;top:834px;width:540px;height:1px;background:#e5e5e5"></div>
<div style="left:808.5px;top:834px;width:120px;height:1px;background:#e5e5e5"></div>
<div style="left:930px;top:834px;width:180px;height:1px;background:#e5e5e5"></div>
<div style="left:1112px;top:834px;width:158px;height:1px;background:#e5e5e5"></div>
<div style="left:1272px;top:834px;width:114px;height:1px;background:#e5e5e5"></div>
<div style="left:808px;top:834.5px;width:1px;height:43px;background:#e5e5e5"></div>
<div style="left:928px;top:834.5px;width:1px;height:43px;background:#e5e5e5"></div>
<div style="left:930px;top:834.5px;width:1px;height:43px;background:#e5e5e5"></div>
<div style="left:1109px;top:834.5px;width:1px;height:43px;background:#e5e5e5"></div>
<div style="left:1112px;top:834.5px;width:1px;height:43px;background:#e5e5e5"></div>
<div style="left:1269px;top:834.5px;width:1px;height:43px;background:#e5e5e5"></div>
<div style="left:1272px;top:834.5px;width:1px;height:43px;background:#e5e5e5"></div>
<div style="left:1110.5px;top:833.5px;width:1.5px;height:44px;background:#fdfdfd"></div>
<div style="left:1270.5px;top:833.5px;width:1.5px;height:44px;background:#fdfdfd"></div>
<span style="left:280.15px;top:848.00px;font-size:19px;color:#2b4c9b;letter-spacing:-1.185px;-webkit-text-stroke:0.12px #2b4c9b;">Reg</span>
<span style="left:317.40px;top:850.00px;font-size:16px;color:#2b4c9b;-webkit-text-stroke:0.12px #2b4c9b;margin-left:-0.8px;">&gt;</span>
<span style="left:330.15px;top:848.00px;font-size:19px;color:#2b4c9b;letter-spacing:-0.041px;-webkit-text-stroke:0.12px #2b4c9b;">Registration Source</span>
<div style="left:824.25px;top:841.25px;width:29.5px;height:29.5px;background:#fbfbfb;border:2px solid #cfd6df;border-radius:6px;box-sizing:border-box"></div>
<div style="left:945px;top:841.25px;width:29.5px;height:29.5px;background:#fbfbfb;border:2px solid #cfd6df;border-radius:6px;box-sizing:border-box"></div>
<div style="left:1128.25px;top:841.25px;width:29.5px;height:29.5px;background:#fbfbfb;border:2px solid #cfd6df;border-radius:6px;box-sizing:border-box"></div>
<span style="left:859.36px;top:846.60px;font-size:19px;color:#1c1c1c;letter-spacing:0.569px;-webkit-text-stroke:0.12px #1c1c1c;">Group</span>
<span style="left:980.96px;top:846.60px;font-size:19px;color:#1c1c1c;letter-spacing:-0.005px;-webkit-text-stroke:0.12px #1c1c1c;">Aggregate By</span>
<span style="left:1163.65px;top:846.60px;font-size:19px;color:#1c1c1c;letter-spacing:0.298px;-webkit-text-stroke:0.12px #1c1c1c;">Not Empty</span>
<svg style="left:1283.2px;top:846.1px;width:20px;height:20px" viewBox="0 0 20 20"><path d="M10 0V20M0 10H20" stroke="#111" stroke-width="3.2" fill="none"/></svg>
<span style="left:1314.43px;top:845.30px;font-size:23px;color:#565656;letter-spacing:-0.851px;">Refine</span>
<div style="left:268.5px;top:877px;width:540px;height:1px;background:#e5e5e5"></div>
<div style="left:808.5px;top:877px;width:120px;height:1px;background:#e5e5e5"></div>
<div style="left:930px;top:877px;width:180px;height:1px;background:#e5e5e5"></div>
<div style="left:1112px;top:877px;width:158px;height:1px;background:#e5e5e5"></div>
<div style="left:1272px;top:877px;width:114px;height:1px;background:#e5e5e5"></div>
<div style="left:808px;top:877.4px;width:1px;height:43px;background:#e5e5e5"></div>
<div style="left:928px;top:877.4px;width:1px;height:43px;background:#e5e5e5"></div>
<div style="left:930px;top:877.4px;width:1px;height:43px;background:#e5e5e5"></div>
<div style="left:1109px;top:877.4px;width:1px;height:43px;background:#e5e5e5"></div>
<div style="left:1112px;top:877.4px;width:1px;height:43px;background:#e5e5e5"></div>
<div style="left:1269px;top:877.4px;width:1px;height:43px;background:#e5e5e5"></div>
<div style="left:1272px;top:877.4px;width:1px;height:43px;background:#e5e5e5"></div>
<div style="left:1110.5px;top:876.4px;width:1.5px;height:44px;background:#fdfdfd"></div>
<div style="left:1270.5px;top:876.4px;width:1.5px;height:44px;background:#fdfdfd"></div>
<span style="left:280.15px;top:890.90px;font-size:19px;color:#2b4c9b;letter-spacing:-1.185px;-webkit-text-stroke:0.12px #2b4c9b;">Reg</span>
<span style="left:317.40px;top:892.90px;font-size:16px;color:#2b4c9b;-webkit-text-stroke:0.12px #2b4c9b;margin-left:-0.8px;">&gt;</span>
<span style="left:330.15px;top:890.90px;font-size:19px;color:#2b4c9b;letter-spacing:0.499px;-webkit-text-stroke:0.12px #2b4c9b;">Growth Mode</span>
<div style="left:824.25px;top:884.15px;width:29.5px;height:29.5px;background:#fbfbfb;border:2px solid #cfd6df;border-radius:6px;box-sizing:border-box"></div>
<div style="left:945px;top:884.15px;width:29.5px;height:29.5px;background:#fbfbfb;border:2px solid #cfd6df;border-radius:6px;box-sizing:border-box"></div>
<div style="left:1128.25px;top:884.15px;width:29.5px;height:29.5px;background:#fbfbfb;border:2px solid #cfd6df;border-radius:6px;box-sizing:border-box"></div>
<span style="left:859.36px;top:889.50px;font-size:19px;color:#1c1c1c;letter-spacing:0.569px;-webkit-text-stroke:0.12px #1c1c1c;">Group</span>
<span style="left:980.96px;top:889.50px;font-size:19px;color:#1c1c1c;letter-spacing:-0.005px;-webkit-text-stroke:0.12px #1c1c1c;">Aggregate By</span>
<span style="left:1163.65px;top:889.50px;font-size:19px;color:#1c1c1c;letter-spacing:0.298px;-webkit-text-stroke:0.12px #1c1c1c;">Not Empty</span>
<svg style="left:1283.2px;top:889px;width:20px;height:20px" viewBox="0 0 20 20"><path d="M10 0V20M0 10H20" stroke="#111" stroke-width="3.2" fill="none"/></svg>
<span style="left:1314.43px;top:888.20px;font-size:23px;color:#565656;letter-spacing:-0.851px;">Refine</span>
<div style="left:268.5px;top:920px;width:540px;height:1px;background:#e5e5e5"></div>
<div style="left:808.5px;top:920px;width:120px;height:1px;background:#e5e5e5"></div>
<div style="left:930px;top:920px;width:180px;height:1px;background:#e5e5e5"></div>
<div style="left:1112px;top:920px;width:158px;height:1px;background:#e5e5e5"></div>
<div style="left:1272px;top:920px;width:114px;height:1px;background:#e5e5e5"></div>
<div style="left:808px;top:920.5px;width:1px;height:43px;background:#e5e5e5"></div>
<div style="left:928px;top:920.5px;width:1px;height:43px;background:#e5e5e5"></div>
<div style="left:930px;top:920.5px;width:1px;height:43px;background:#e5e5e5"></div>
<div style="left:1109px;top:920.5px;width:1px;height:43px;background:#e5e5e5"></div>
<div style="left:1112px;top:920.5px;width:1px;height:43px;background:#e5e5e5"></div>
<div style="left:1269px;top:920.5px;width:1px;height:43px;background:#e5e5e5"></div>
<div style="left:1272px;top:920.5px;width:1px;height:43px;background:#e5e5e5"></div>
<div style="left:1110.5px;top:919.5px;width:1.5px;height:44px;background:#fdfdfd"></div>
<div style="left:1270.5px;top:919.5px;width:1.5px;height:44px;background:#fdfdfd"></div>
<span style="left:280.15px;top:934.00px;font-size:19px;color:#2b4c9b;letter-spacing:-1.185px;-webkit-text-stroke:0.12px #2b4c9b;">Reg</span>
<span style="left:317.40px;top:936.00px;font-size:16px;color:#2b4c9b;-webkit-text-stroke:0.12px #2b4c9b;margin-left:-0.8px;">&gt;</span>
<span style="left:330.15px;top:934.00px;font-size:19px;color:#2b4c9b;letter-spacing:0.584px;-webkit-text-stroke:0.12px #2b4c9b;">Morphology</span>
<div style="left:824.25px;top:926.75px;width:29.5px;height:29.5px;background:#fbfbfb;border:2px solid #cfd6df;border-radius:6px;box-sizing:border-box"></div>
<div style="left:945px;top:926.75px;width:29.5px;height:29.5px;background:#fbfbfb;border:2px solid #cfd6df;border-radius:6px;box-sizing:border-box"></div>
<div style="left:1128.25px;top:926.75px;width:29.5px;height:29.5px;background:#fbfbfb;border:2px solid #cfd6df;border-radius:6px;box-sizing:border-box"></div>
<span style="left:859.36px;top:932.10px;font-size:19px;color:#1c1c1c;letter-spacing:0.569px;-webkit-text-stroke:0.12px #1c1c1c;">Group</span>
<span style="left:980.96px;top:932.10px;font-size:19px;color:#1c1c1c;letter-spacing:-0.005px;-webkit-text-stroke:0.12px #1c1c1c;">Aggregate By</span>
<span style="left:1163.65px;top:932.10px;font-size:19px;color:#1c1c1c;letter-spacing:0.298px;-webkit-text-stroke:0.12px #1c1c1c;">Not Empty</span>
<svg style="left:1283.2px;top:931.6px;width:20px;height:20px" viewBox="0 0 20 20"><path d="M10 0V20M0 10H20" stroke="#111" stroke-width="3.2" fill="none"/></svg>
<span style="left:1314.43px;top:930.80px;font-size:23px;color:#565656;letter-spacing:-0.851px;">Refine</span>
<div style="left:268.5px;top:963px;width:540px;height:1px;background:#e5e5e5"></div>
<div style="left:808.5px;top:962px;width:120px;height:1px;background:#e5e5e5"></div>
<div style="left:930px;top:962px;width:180px;height:1px;background:#e5e5e5"></div>
<div style="left:1112px;top:962px;width:158px;height:1px;background:#e5e5e5"></div>
<div style="left:1272px;top:962px;width:114px;height:1px;background:#e5e5e5"></div>
<div style="left:808px;top:963.4px;width:1px;height:43px;background:#e5e5e5"></div>
<div style="left:928px;top:963.4px;width:1px;height:43px;background:#e5e5e5"></div>
<div style="left:930px;top:963.4px;width:1px;height:43px;background:#e5e5e5"></div>
<div style="left:1109px;top:963.4px;width:1px;height:43px;background:#e5e5e5"></div>
<div style="left:1112px;top:963.4px;width:1px;height:43px;background:#e5e5e5"></div>
<div style="left:1269px;top:963.4px;width:1px;height:43px;background:#e5e5e5"></div>
<div style="left:1272px;top:963.4px;width:1px;height:43px;background:#e5e5e5"></div>
<div style="left:1110.5px;top:962.4px;width:1.5px;height:44px;background:#fdfdfd"></div>
<div style="left:1270.5px;top:962.4px;width:1.5px;height:44px;background:#fdfdfd"></div>
<span style="left:280.15px;top:976.90px;font-size:19px;color:#2b4c9b;letter-spacing:-1.185px;-webkit-text-stroke:0.12px #2b4c9b;">Reg</span>
<span style="left:317.40px;top:978.90px;font-size:16px;color:#2b4c9b;-webkit-text-stroke:0.12px #2b4c9b;margin-left:-0.8px;">&gt;</span>
<span style="left:330.15px;top:976.90px;font-size:19px;color:#2b4c9b;letter-spacing:0.487px;-webkit-text-stroke:0.12px #2b4c9b;">Karyotype</span>
<div style="left:824.25px;top:969.65px;width:29.5px;height:29.5px;background:#fbfbfb;border:2px solid #cfd6df;border-radius:6px;box-sizing:border-box"></div>
<div style="left:945px;top:969.65px;width:29.5px;height:29.5px;background:#fbfbfb;border:2px solid #cfd6df;border-radius:6px;box-sizing:border-box"></div>
<div style="left:1128.25px;top:969.65px;width:29.5px;height:29.5px;background:#fbfbfb;border:2px solid #cfd6df;border-radius:6px;box-sizing:border-box"></div>
<span style="left:859.36px;top:975.00px;font-size:19px;color:#1c1c1c;letter-spacing:0.569px;-webkit-text-stroke:0.12px #1c1c1c;">Group</span>
<span style="left:980.96px;top:975.00px;font-size:19px;color:#1c1c1c;letter-spacing:-0.005px;-webkit-text-stroke:0.12px #1c1c1c;">Aggregate By</span>
<span style="left:1163.65px;top:975.00px;font-size:19px;color:#1c1c1c;letter-spacing:0.298px;-webkit-text-stroke:0.12px #1c1c1c;">Not Empty</span>
<svg style="left:1283.2px;top:974.5px;width:20px;height:20px" viewBox="0 0 20 20"><path d="M10 0V20M0 10H20" stroke="#111" stroke-width="3.2" fill="none"/></svg>
<span style="left:1314.43px;top:973.70px;font-size:23px;color:#565656;letter-spacing:-0.851px;">Refine</span>
<div style="left:268.5px;top:1006px;width:540px;height:1px;background:#e5e5e5"></div>
<div style="left:808.5px;top:1005px;width:120px;height:1px;background:#e5e5e5"></div>
<div style="left:930px;top:1005px;width:180px;height:1px;background:#e5e5e5"></div>
<div style="left:1112px;top:1005px;width:158px;height:1px;background:#e5e5e5"></div>
<div style="left:1272px;top:1005px;width:114px;height:1px;background:#e5e5e5"></div>
<div style="left:808px;top:1006.2px;width:1px;height:43px;background:#e5e5e5"></div>
<div style="left:928px;top:1006.2px;width:1px;height:43px;background:#e5e5e5"></div>
<div style="left:930px;top:1006.2px;width:1px;height:43px;background:#e5e5e5"></div>
<div style="left:1109px;top:1006.2px;width:1px;height:43px;background:#e5e5e5"></div>
<div style="left:1112px;top:1006.2px;width:1px;height:43px;background:#e5e5e5"></div>
<div style="left:1269px;top:1006.2px;width:1px;height:43px;background:#e5e5e5"></div>
<div style="left:1272px;top:1006.2px;width:1px;height:43px;background:#e5e5e5"></div>
<div style="left:1110.5px;top:1005.2px;width:1.5px;height:44px;background:#fdfdfd"></div>
<div style="left:1270.5px;top:1005.2px;width:1.5px;height:44px;background:#fdfdfd"></div>
<span style="left:280.15px;top:1019.70px;font-size:19px;color:#2b4c9b;letter-spacing:-1.185px;-webkit-text-stroke:0.12px #2b4c9b;">Reg</span>
<span style="left:317.40px;top:1021.70px;font-size:16px;color:#2b4c9b;-webkit-text-stroke:0.12px #2b4c9b;margin-left:-0.8px;">&gt;</span>
<span style="left:330.15px;top:1019.70px;font-size:19px;color:#2b4c9b;letter-spacing:0.299px;-webkit-text-stroke:0.12px #2b4c9b;">Applications</span>
<div style="left:824.25px;top:1012.45px;width:29.5px;height:29.5px;background:#fbfbfb;border:2px solid #cfd6df;border-radius:6px;box-sizing:border-box"></div>
<div style="left:945px;top:1012.45px;width:29.5px;height:29.5px;background:#fbfbfb;border:2px solid #cfd6df;border-radius:6px;box-sizing:border-box"></div>
<div style="left:1128.25px;top:1012.45px;width:29.5px;height:29.5px;background:#fbfbfb;border:2px solid #cfd6df;border-radius:6px;box-sizing:border-box"></div>
<span style="left:859.36px;top:1017.80px;font-size:19px;color:#1c1c1c;letter-spacing:0.569px;-webkit-text-stroke:0.12px #1c1c1c;">Group</span>
<span style="left:980.96px;top:1017.80px;font-size:19px;color:#1c1c1c;letter-spacing:-0.005px;-webkit-text-stroke:0.12px #1c1c1c;">Aggregate By</span>
<span style="left:1163.65px;top:1017.80px;font-size:19px;color:#1c1c1c;letter-spacing:0.298px;-webkit-text-stroke:0.12px #1c1c1c;">Not Empty</span>
<svg style="left:1283.2px;top:1017.3px;width:20px;height:20px" viewBox="0 0 20 20"><path d="M10 0V20M0 10H20" stroke="#111" stroke-width="3.2" fill="none"/></svg>
<span style="left:1314.43px;top:1016.50px;font-size:23px;color:#565656;letter-spacing:-0.851px;">Refine</span>
<div style="left:268.5px;top:1048px;width:540px;height:1px;background:#e5e5e5"></div>
<div style="left:808.5px;top:1048px;width:120px;height:1px;background:#e5e5e5"></div>
<div style="left:930px;top:1048px;width:180px;height:1px;background:#e5e5e5"></div>
<div style="left:1112px;top:1048px;width:158px;height:1px;background:#e5e5e5"></div>
<div style="left:1272px;top:1048px;width:114px;height:1px;background:#e5e5e5"></div>
<div style="left:808px;top:1049px;width:1px;height:38.5px;background:#e5e5e5"></div>
<div style="left:928px;top:1049px;width:1px;height:38.5px;background:#e5e5e5"></div>
<div style="left:930px;top:1049px;width:1px;height:38.5px;background:#e5e5e5"></div>
<div style="left:1109px;top:1049px;width:1px;height:38.5px;background:#e5e5e5"></div>
<div style="left:1112px;top:1049px;width:1px;height:38.5px;background:#e5e5e5"></div>
<div style="left:1269px;top:1049px;width:1px;height:38.5px;background:#e5e5e5"></div>
<div style="left:1272px;top:1049px;width:1px;height:38.5px;background:#e5e5e5"></div>
<div style="left:1110.5px;top:1048px;width:1.5px;height:39.5px;background:#fdfdfd"></div>
<div style="left:1270.5px;top:1048px;width:1.5px;height:39.5px;background:#fdfdfd"></div>
<span style="left:280.15px;top:1062.50px;font-size:19px;color:#2b4c9b;letter-spacing:-1.185px;-webkit-text-stroke:0.12px #2b4c9b;">Reg</span>
<span style="left:317.40px;top:1064.50px;font-size:16px;color:#2b4c9b;-webkit-text-stroke:0.12px #2b4c9b;margin-left:-0.8px;">&gt;</span>
<span style="left:330.15px;top:1062.50px;font-size:19px;color:#2b4c9b;letter-spacing:0.257px;-webkit-text-stroke:0.12px #2b4c9b;">Original Media</span>
<div style="left:824.25px;top:1055.35px;width:29.5px;height:29.5px;background:#fbfbfb;border:2px solid #cfd6df;border-radius:6px;box-sizing:border-box"></div>
<div style="left:945px;top:1055.35px;width:29.5px;height:29.5px;background:#fbfbfb;border:2px solid #cfd6df;border-radius:6px;box-sizing:border-box"></div>
<div style="left:1128.25px;top:1055.35px;width:29.5px;height:29.5px;background:#fbfbfb;border:2px solid #cfd6df;border-radius:6px;box-sizing:border-box"></div>
<span style="left:859.36px;top:1060.70px;font-size:19px;color:#1c1c1c;letter-spacing:0.569px;-webkit-text-stroke:0.12px #1c1c1c;">Group</span>
<span style="left:980.96px;top:1060.70px;font-size:19px;color:#1c1c1c;letter-spacing:-0.005px;-webkit-text-stroke:0.12px #1c1c1c;">Aggregate By</span>
<span style="left:1163.65px;top:1060.70px;font-size:19px;color:#1c1c1c;letter-spacing:0.298px;-webkit-text-stroke:0.12px #1c1c1c;">Not Empty</span>
<svg style="left:1283.2px;top:1060.2px;width:20px;height:20px" viewBox="0 0 20 20"><path d="M10 0V20M0 10H20" stroke="#111" stroke-width="3.2" fill="none"/></svg>
<span style="left:1314.43px;top:1059.40px;font-size:23px;color:#565656;letter-spacing:-0.851px;">Refine</span>
<div style="left:1181px;top:1041px;width:205px;height:45.5px;background:#a61e68;border-radius:0 3px 0 0"></div>
<span style="left:1199.92px;top:1053.10px;font-size:25px;color:#fff;letter-spacing:0.282px;-webkit-text-stroke:0.45px #fff;">Submit Search</span>
<div style="left:1386px;top:378px;width:2px;height:712px;background:#626262"></div>
<div style="left:261px;top:1087px;width:1125px;height:1px;background:rgba(255,255,255,.9)"></div>
<div style="left:259px;top:1088px;width:1129px;height:2px;background:#626262"></div>
<div style="left:254px;top:1090px;width:1136px;height:3px;background:#fff"></div>
<div style="left:702px;top:28px;width:425px;height:337px;border:3px solid #d6202b;box-sizing:border-box;border-radius:1px"></div>
<div style="left:709.8px;top:151.6px;width:372.8px;height:33px;border:3px solid #d6202b;box-sizing:border-box;border-radius:1px"></div>
<div style="left:1052px;top:185px;width:3px;height:187px;background:#d6202b"></div>
<svg style="left:1044px;top:369px;width:20px;height:20px" viewBox="0 0 20 20"><path d="M1.2 0.5 L16.7 0.5 L9.1 18 Z" fill="#ec1c24"/></svg>
</div></body></html>
